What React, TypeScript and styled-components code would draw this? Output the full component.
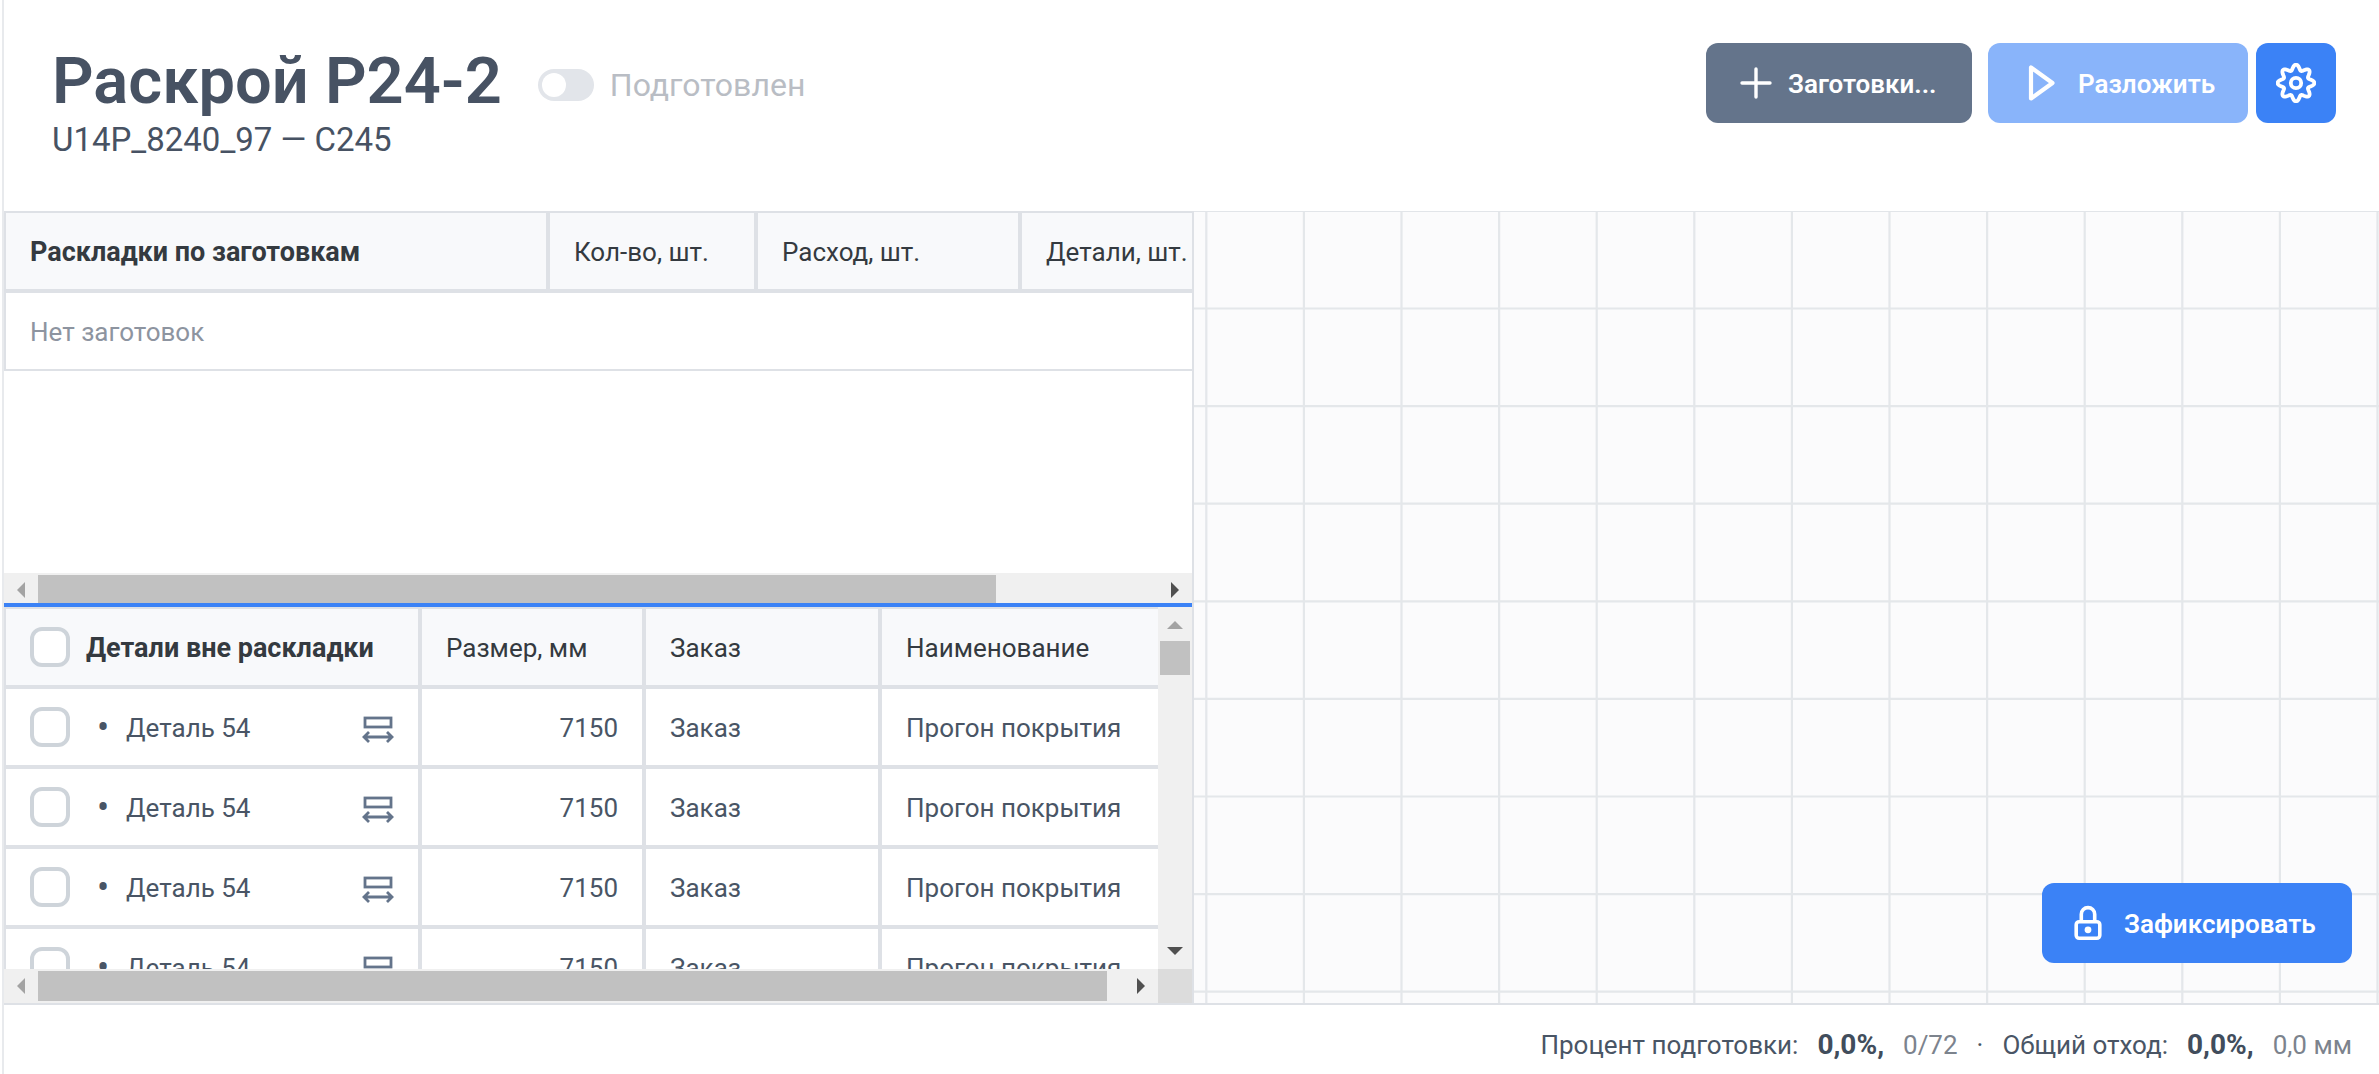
import React from "react";
import styled, { createGlobalStyle } from "styled-components";

const color = {
  line: "#dee1e6",
  text: "#495565",
  heading: "#475263",
  dark: "#343a40",
  muted: "#8d94a0",
  primary: "#3b82f6",
  slate: "#64748b",
};

const GlobalStyle = createGlobalStyle`
  *, *::before, *::after { box-sizing: border-box; }
  body {
    margin: 0;
    background: #fff;
    color: ${color.text};
    font-family: Roboto, "Noto Sans", sans-serif;
    font-size: 26px;
    line-height: 32px;
  }
`;

const Page = styled.div`
  display: flex;
  flex-direction: column;
  height: 100vh;
  margin-left: 2px;
  border-left: 2px solid #e8eaed;
`;

const Header = styled.header`
  display: flex;
  justify-content: space-between;
  align-items: flex-start;
  padding: 43px 43px 50px 48px;
`;

const TitleRow = styled.div`
  display: flex;
  align-items: center;
  gap: 36px;
`;

const Title = styled.h1`
  margin: 0;
  font-size: 65px;
  line-height: 76px;
  font-weight: 600;
  color: ${color.heading};
`;

const Subtitle = styled.p`
  margin: 0;
  font-size: 33px;
  line-height: 42px;
  color: ${color.heading};
`;

const SwitchLabel = styled.label`
  display: flex;
  align-items: center;
  gap: 16px;
  padding-top: 8px;
  font-size: 32px;
  line-height: 40px;
  color: #b9bdc4;
`;

const Switch = styled.input`
  appearance: none;
  display: flex;
  width: 56px;
  height: 32px;
  margin: 0;
  padding: 4px;
  border-radius: 16px;
  background: #e2e5ea;
  &::before {
    content: "";
    width: 24px;
    height: 24px;
    border-radius: 50%;
    background: #fff;
  }
`;

const Actions = styled.div`
  display: flex;
  gap: 16px;
`;

const SplitButton = styled.div`
  display: flex;
  gap: 8px;
`;

const Button = styled.button<{ $bg?: string; $width: number; $pad?: number; $gap?: number }>`
  display: flex;
  align-items: center;
  gap: ${(p) => p.$gap ?? 12}px;
  min-width: ${(p) => p.$width}px;
  height: 80px;
  padding: 0 ${(p) => p.$pad ?? 30}px;
  border: 0;
  border-radius: 12px;
  background: ${(p) => p.$bg ?? color.primary};
  color: #fff;
  font: inherit;
  font-weight: 600;
  white-space: nowrap;
  span {
    padding-top: 2px;
  }
  svg {
    flex: none;
  }
`;

const Workspace = styled.main`
  flex: 1;
  min-height: 0;
  display: grid;
  grid-template-columns: minmax(0, 1190fr) minmax(0, 1185fr);
`;

const Panels = styled.div`
  display: grid;
  grid-template-rows: minmax(0, 392fr) 4px minmax(0, 396fr);
  min-height: 0;
  border-right: 2px solid ${color.line};
`;

const Splitter = styled.div`
  background: ${color.primary};
`;

const Pane = styled.section`
  display: grid;
  grid-template-columns: minmax(0, 1fr) auto;
  grid-template-rows: minmax(0, 1fr) auto;
  min-height: 0;
`;

const Viewport = styled.div`
  overflow: hidden;
`;

const Table = styled.table<{ $width: number }>`
  width: ${(p) => p.$width}px;
  table-layout: fixed;
  border-collapse: separate;
  border-spacing: 0;
`;

const HeadCell = styled.th<{ $strong?: boolean }>`
  height: 80px;
  padding: 2px 24px 0;
  border: 2px solid ${color.line};
  background: #f8f9fb;
  color: ${color.dark};
  text-align: left;
  white-space: nowrap;
  font-weight: ${(p) => (p.$strong ? 700 : 400)};
  font-size: ${(p) => (p.$strong ? 27 : 26)}px;
`;

const Cell = styled.td<{ $align?: string; $muted?: boolean }>`
  height: 80px;
  padding: 2px 24px 0;
  border: 2px solid ${color.line};
  text-align: ${(p) => p.$align ?? "left"};
  color: ${(p) => (p.$muted ? color.muted : color.text)};
  white-space: nowrap;
`;

const CellRow = styled.div`
  display: flex;
  align-items: center;
  justify-content: space-between;
`;

const CheckLabel = styled.label`
  display: flex;
  align-items: center;
`;

const Checkbox = styled.input`
  appearance: none;
  width: 40px;
  height: 40px;
  margin: -2px 16px 0 0;
  border: 4px solid #ced4da;
  border-radius: 12px;
  background: #fff;
`;

const Bullet = styled.span`
  width: 34px;
  margin-right: 6px;
  font-size: 36px;
  text-align: center;
`;

const Bar = styled.div<{ $vertical?: boolean; $cut?: boolean }>`
  display: flex;
  flex-direction: ${(p) => (p.$vertical ? "column" : "row")};
  width: ${(p) => (p.$vertical ? "34px" : "auto")};
  height: ${(p) => (p.$vertical ? "auto" : p.$cut ? "30px" : "34px")};
  overflow: hidden;
  background: #f0f0f0;
`;

const BarArrow = styled.span`
  display: flex;
  flex: none;
  width: 34px;
  height: 34px;
`;

const Track = styled.div<{ $vertical?: boolean }>`
  flex: 1;
  padding: ${(p) => (p.$vertical ? "0 2px" : "2px 0")};
`;

const Thumb = styled.div<{ $vertical?: boolean }>`
  height: ${(p) => (p.$vertical ? "34px" : "30px")};
  background: #c1c1c1;
`;

const BarCorner = styled.div`
  background: #dcdcdc;
`;

const Canvas = styled.section`
  position: relative;
  overflow: hidden;
  border-top: 1px solid #e2e5e9;
  background: #fbfbfc;
  svg {
    display: block;
  }
`;

const LockAction = styled.div`
  position: absolute;
  right: 27px;
  bottom: 40px;
`;

const Footer = styled.footer`
  display: flex;
  justify-content: flex-end;
  gap: 19px;
  padding: 24px 27px 13px;
  border-top: 2px solid ${color.line};
  white-space: nowrap;
  strong {
    font-size: 28px;
    color: #414d5c;
  }
`;

const Faded = styled.span`
  color: #7c838d;
`;

type Direction = "left" | "right" | "up" | "down";

const arrowShapes: Record<Direction, string> = {
  left: "21,9 21,25 13,17",
  right: "13,9 13,25 21,17",
  up: "9,22 25,22 17,14",
  down: "9,12 25,12 17,20",
};

function Arrow({ to, active }: { to: Direction; active?: boolean }) {
  return (
    <BarArrow>
      <svg width="34" height="34" aria-hidden="true">
        <polygon points={arrowShapes[to]} fill={active ? "#505050" : "#a3a3a3"} />
      </svg>
    </BarArrow>
  );
}

function HorizontalBar({ visible, cut }: { visible: number; cut?: boolean }) {
  return (
    <Bar $cut={cut}>
      <Arrow to="left" />
      <Track>
        <Thumb style={{ width: `${visible * 100}%` }} />
      </Track>
      <Arrow to="right" active />
    </Bar>
  );
}

function VerticalBar() {
  return (
    <Bar $vertical>
      <Arrow to="up" />
      <Track $vertical>
        <Thumb $vertical />
      </Track>
      <Arrow to="down" active />
    </Bar>
  );
}

function PlusIcon() {
  return (
    <svg width="40" height="40" fill="none" stroke="#fff" strokeWidth="3.4" strokeLinecap="round" aria-hidden="true">
      <path d="M20 6v28M6 20h28" />
    </svg>
  );
}

function PlayIcon() {
  return (
    <svg width="48" height="48" fill="none" stroke="#fff" strokeWidth="4.2" strokeLinejoin="round" aria-hidden="true">
      <path d="M13 8.5v31L34.5 24z" />
    </svg>
  );
}

const gearOutline =
  Array.from({ length: 160 }, (_, i) => {
    const a = (i / 160) * Math.PI * 2;
    const r = 15.7 + 2.7 * Math.cos(8 * a);
    return `${i ? "L" : "M"}${(20 + r * Math.cos(a)).toFixed(2)} ${(20 + r * Math.sin(a)).toFixed(2)}`;
  }).join("") + "Z";

function GearIcon() {
  return (
    <svg width="40" height="40" fill="none" stroke="#fff" strokeWidth="3.8" strokeLinejoin="round" aria-hidden="true">
      <path d={gearOutline} />
      <circle cx="20" cy="20" r="5.2" />
    </svg>
  );
}

function LockIcon() {
  return (
    <svg width="40" height="40" fill="none" stroke="#fff" strokeWidth="3.6" aria-hidden="true">
      <rect x="8.2" y="18.7" width="23.6" height="16.6" rx="3" />
      <path d="M13.3 18.7v-7.4a6.7 6.7 0 0 1 13.4 0v7.4" />
      <circle cx="20" cy="26.8" r="3.4" fill="#fff" stroke="none" />
    </svg>
  );
}

function LengthIcon() {
  return (
    <svg width="32" height="32" fill="none" stroke={color.slate} strokeWidth="2.8" aria-hidden="true">
      <rect x="3" y="6" width="26" height="9" />
      <path d="M2.5 25h27M7 20l-5 5 5 5M25 20l5 5-5 5" />
    </svg>
  );
}

const GRID_STEP = 97.6;

function CanvasGrid() {
  const lines = Array.from({ length: 50 }, (_, i) => i * GRID_STEP);
  return (
    <svg width="100%" height="100%" stroke="#e4e7ea" strokeWidth="2.2" aria-hidden="true">
      {lines.map((v) => (
        <line key={`x${v}`} x1={v + 12.3} x2={v + 12.3} y1="0" y2="4000" />
      ))}
      {lines.map((v) => (
        <line key={`y${v}`} y1={v - 1.1} y2={v - 1.1} x1="0" x2="4800" />
      ))}
    </svg>
  );
}

const parts = [1, 2, 3, 4].map((id) => ({
  id,
  name: "Деталь 54",
  size: 7150,
  order: "Заказ",
  title: "Прогон покрытия",
}));

export default function App() {
  return (
    <>
      <GlobalStyle />
      <Page>
        <Header>
          <div>
            <TitleRow>
              <Title>Раскрой Р24-2</Title>
              <SwitchLabel htmlFor="prepared">
                <Switch id="prepared" type="checkbox" role="switch" disabled />
                Подготовлен
              </SwitchLabel>
            </TitleRow>
            <Subtitle>U14P_8240_97 — C245</Subtitle>
          </div>
          <Actions>
            <Button type="button" $bg={color.slate} $width={266}>
              <PlusIcon />
              <span>Заготовки...</span>
            </Button>
            <SplitButton>
              <Button type="button" $bg="#89b4fa" $width={260} disabled>
                <PlayIcon />
                <span>Разложить</span>
              </Button>
              <Button type="button" $width={80} $pad={20} aria-label="Настройки">
                <GearIcon />
              </Button>
            </SplitButton>
          </Actions>
        </Header>

        <Workspace>
          <Panels>
            <Pane>
              <Viewport>
                <Table $width={1384}>
                  <colgroup>
                    <col width="544" />
                    <col width="208" />
                    <col width="264" />
                    <col width="368" />
                  </colgroup>
                  <thead>
                    <tr>
                      <HeadCell $strong>Раскладки по заготовкам</HeadCell>
                      <HeadCell>Кол-во, шт.</HeadCell>
                      <HeadCell>Расход, шт.</HeadCell>
                      <HeadCell>Детали, шт.</HeadCell>
                    </tr>
                  </thead>
                  <tbody>
                    <tr>
                      <Cell colSpan={4} $muted>
                        Нет заготовок
                      </Cell>
                    </tr>
                  </tbody>
                </Table>
              </Viewport>
              <div />
              <HorizontalBar visible={0.855} cut />
            </Pane>
            <Splitter role="separator" />
            <Pane>
              <Viewport>
                <Table $width={1172}>
                  <colgroup>
                    <col width="416" />
                    <col width="224" />
                    <col width="236" />
                    <col width="296" />
                  </colgroup>
                  <thead>
                    <tr>
                      <HeadCell $strong>
                        <CheckLabel>
                          <Checkbox type="checkbox" />
                          Детали вне раскладки
                        </CheckLabel>
                      </HeadCell>
                      <HeadCell>Размер, мм</HeadCell>
                      <HeadCell>Заказ</HeadCell>
                      <HeadCell>Наименование</HeadCell>
                    </tr>
                  </thead>
                  <tbody>
                    {parts.map((part) => (
                      <tr key={part.id}>
                        <Cell>
                          <CellRow>
                            <CheckLabel>
                              <Checkbox type="checkbox" />
                              <Bullet>•</Bullet>
                              {part.name}
                            </CheckLabel>
                            <LengthIcon />
                          </CellRow>
                        </Cell>
                        <Cell $align="right">{part.size}</Cell>
                        <Cell>{part.order}</Cell>
                        <Cell>{part.title}</Cell>
                      </tr>
                    ))}
                  </tbody>
                </Table>
              </Viewport>
              <VerticalBar />
              <HorizontalBar visible={0.984} />
              <BarCorner />
            </Pane>
          </Panels>

          <Canvas>
            <CanvasGrid />
            <LockAction>
              <Button type="button" $width={310} $pad={26} $gap={16}>
                <LockIcon />
                <span>Зафиксировать</span>
              </Button>
            </LockAction>
          </Canvas>
        </Workspace>

        <Footer>
          <span>Процент подготовки:</span>
          <strong>0,0%,</strong>
          <Faded>0/72</Faded>
          <span>·</span>
          <span>Общий отход:</span>
          <strong>0,0%,</strong>
          <Faded>0,0 мм</Faded>
        </Footer>
      </Page>
    </>
  );
}
